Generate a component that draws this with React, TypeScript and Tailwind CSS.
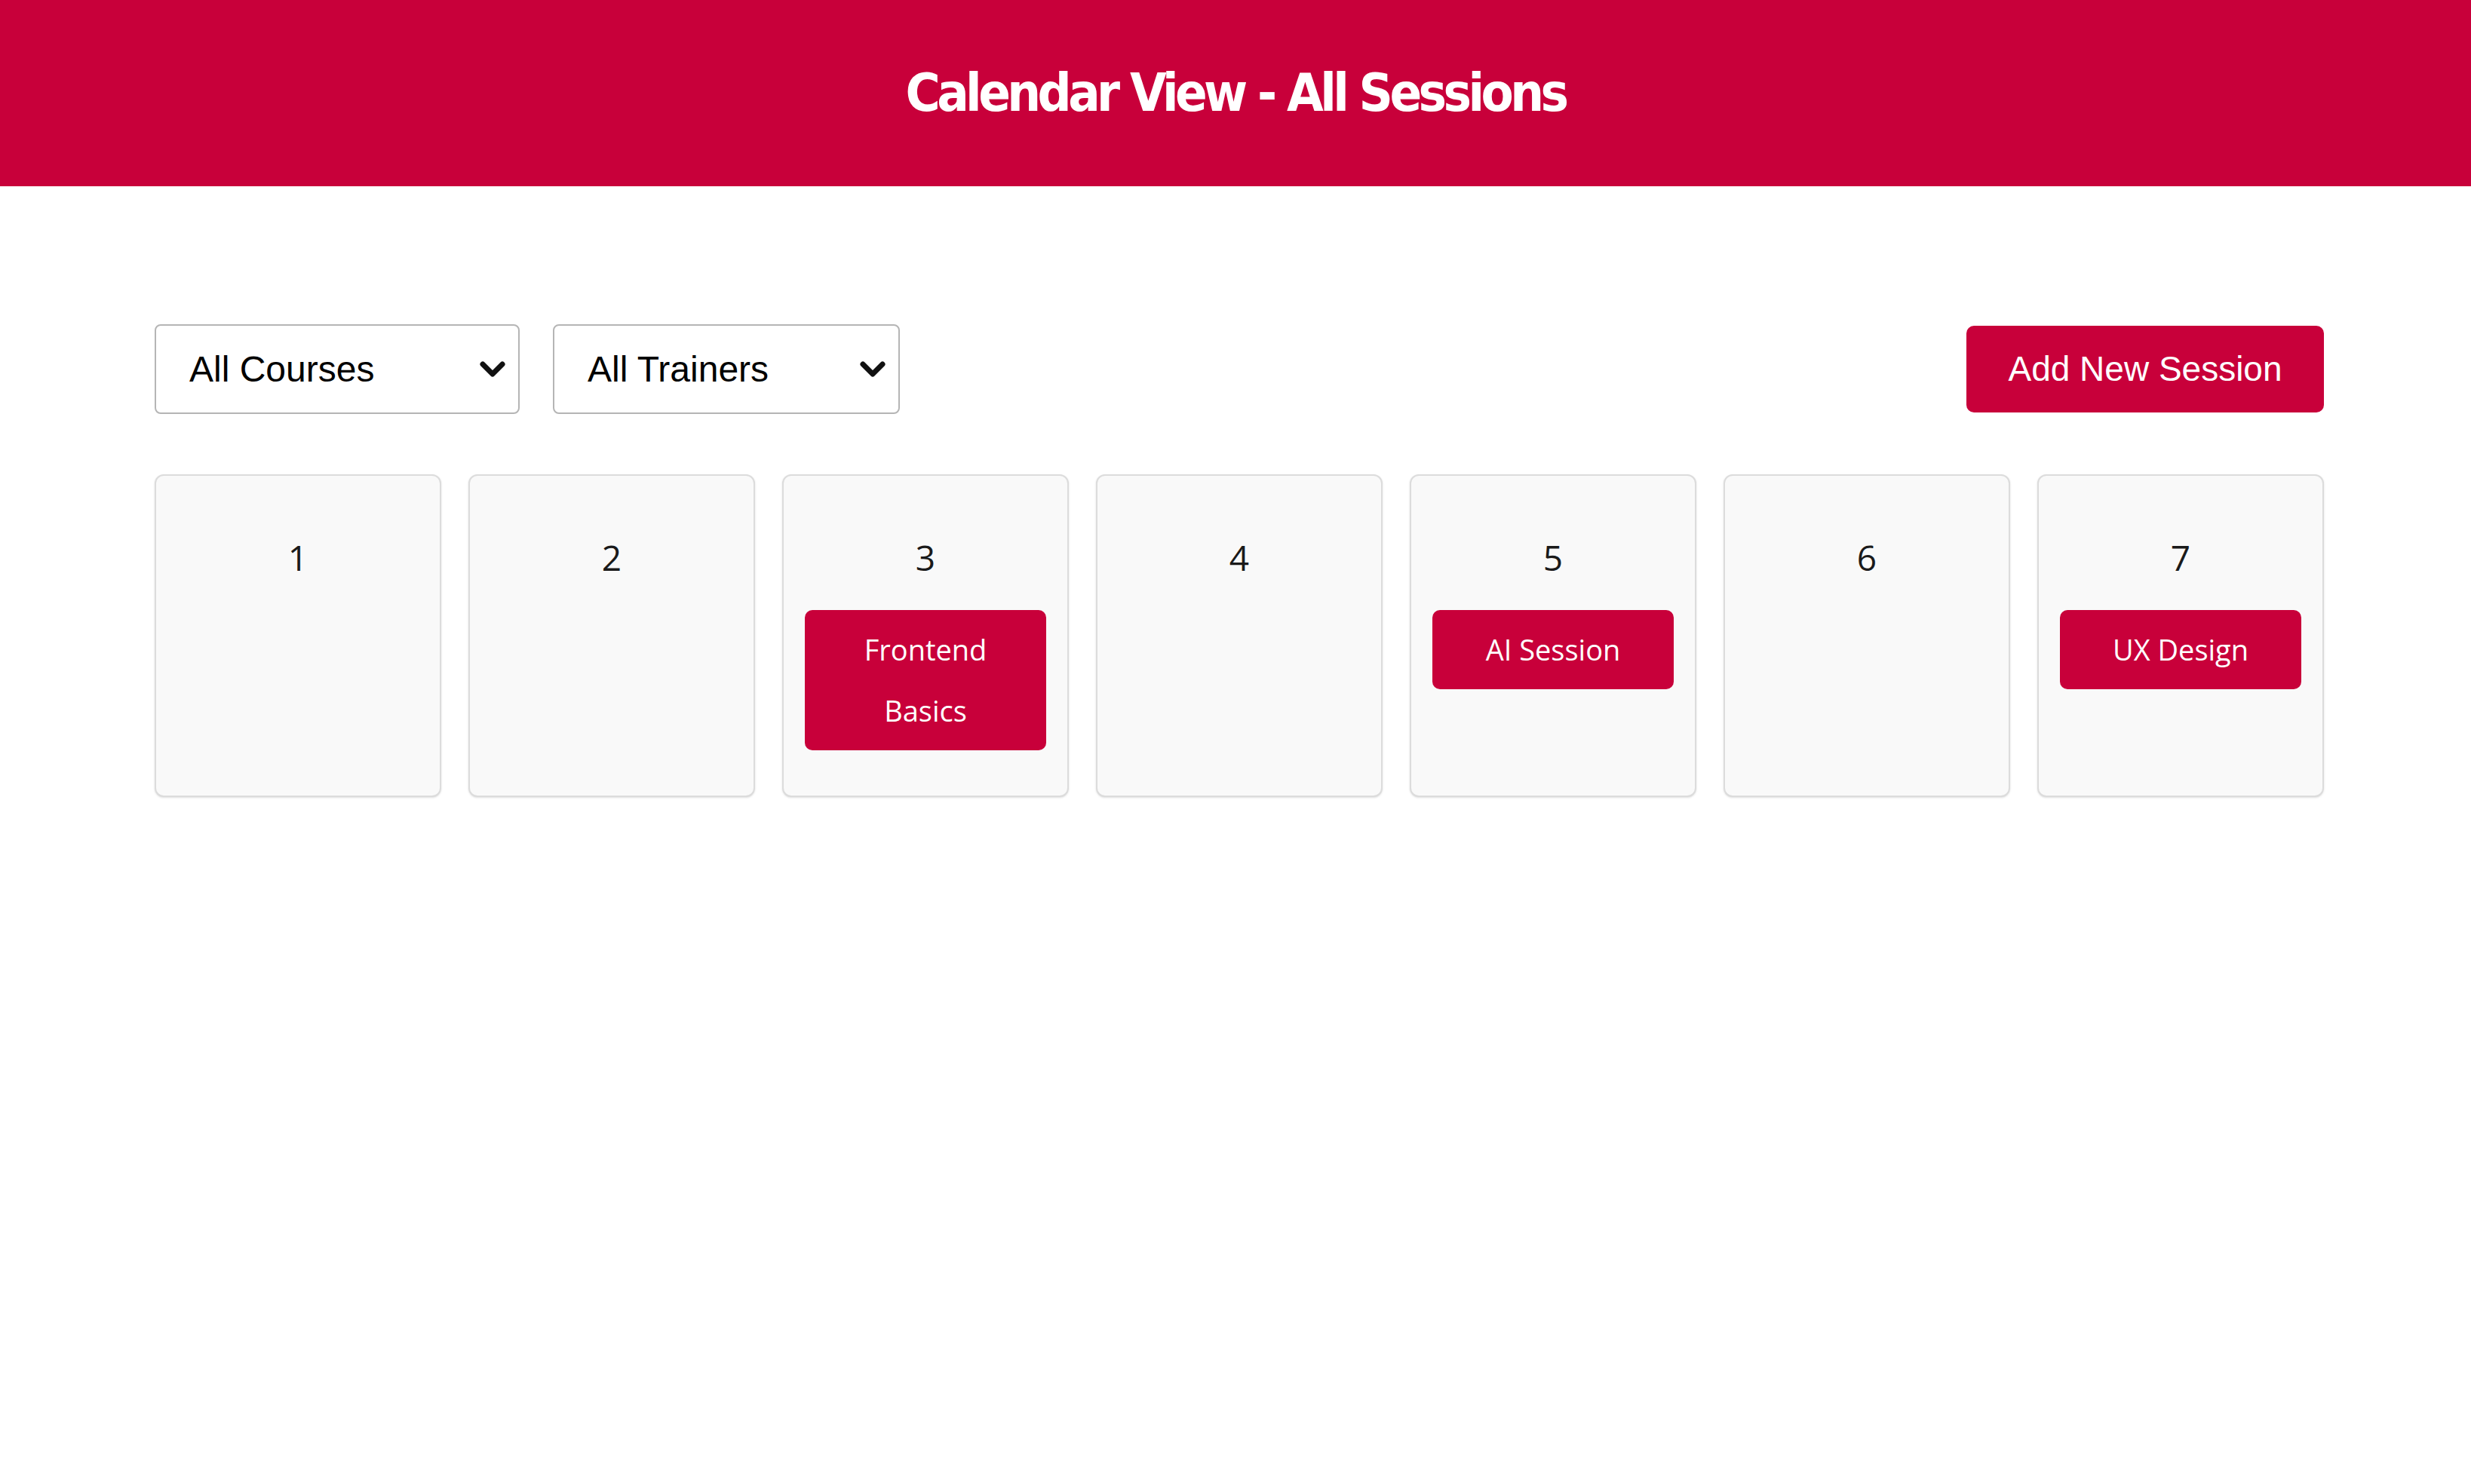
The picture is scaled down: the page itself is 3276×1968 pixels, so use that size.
import React from "react";

const days = [
  { day: 1, sessions: [] as string[] },
  { day: 2, sessions: [] },
  { day: 3, sessions: ["Frontend Basics"] },
  { day: 4, sessions: [] },
  { day: 5, sessions: ["AI Session"] },
  { day: 6, sessions: [] },
  { day: 7, sessions: ["UX Design"] },
];

function Chevron() {
  return (
    <svg width="36" height="24" viewBox="0 0 36 24" className="shrink-0">
      <polyline points="5,5 18,18 31,5" fill="none" stroke="#111" strokeWidth="7" strokeLinecap="round" strokeLinejoin="round" />
    </svg>
  );
}

function FakeSelect({ label, width }: { label: string; width: string }) {
  return (
    <div className={`${width} h-[119px] flex items-center justify-between pl-[44px] pr-[16px] bg-white border-2 border-[#b5b5b5] rounded-[8px] text-[48px] text-black font-['Liberation_Sans',Arial,sans-serif]`}>
      <span>{label}</span>
      <Chevron />
    </div>
  );
}

export default function App() {
  return (
    <div className="min-h-[1968px] bg-white">
      <header className="h-[247px] bg-[#c8003a] flex items-center justify-center">
        <h1 className="text-white text-[70px] font-bold tracking-[-0.065em] font-['DejaVu_Sans_Condensed',sans-serif]">
          Calendar View - All Sessions
        </h1>
      </header>

      <main className="w-[2876px] ml-[205px] pt-[183px]">
        <div className="flex items-center justify-between">
          <div className="flex items-center gap-[44px]">
            <FakeSelect label="All Courses" width="w-[484px]" />
            <FakeSelect label="All Trainers" width="w-[460px]" />
          </div>
          <button className="w-[474px] h-[115px] rounded-[10px] bg-[#c8003a] text-white text-[46px] font-['Liberation_Sans',Arial,sans-serif]">
            Add New Session
          </button>
        </div>

        <div className="mt-[80px] grid grid-cols-7 gap-[36px]">
          {days.map((d) => (
            <div key={d.day} className="h-[428px] bg-[#f9f9f9] border-2 border-[#dcdcdc] rounded-[12px] shadow-sm px-[28px] pt-[58px] font-['Open_Sans',sans-serif]">
              <div className="text-center text-[46px] font-medium leading-[100px] text-[#1a1a1a]">{d.day}</div>
              {d.sessions.map((s) => (
                <div key={s} className="mt-[20px] bg-[#c8003a] rounded-[10px] text-white text-center text-[38px] font-medium leading-[81px] py-[12px] px-[30px]">
                  {s}
                </div>
              ))}
            </div>
          ))}
        </div>
      </main>
    </div>
  );
}
